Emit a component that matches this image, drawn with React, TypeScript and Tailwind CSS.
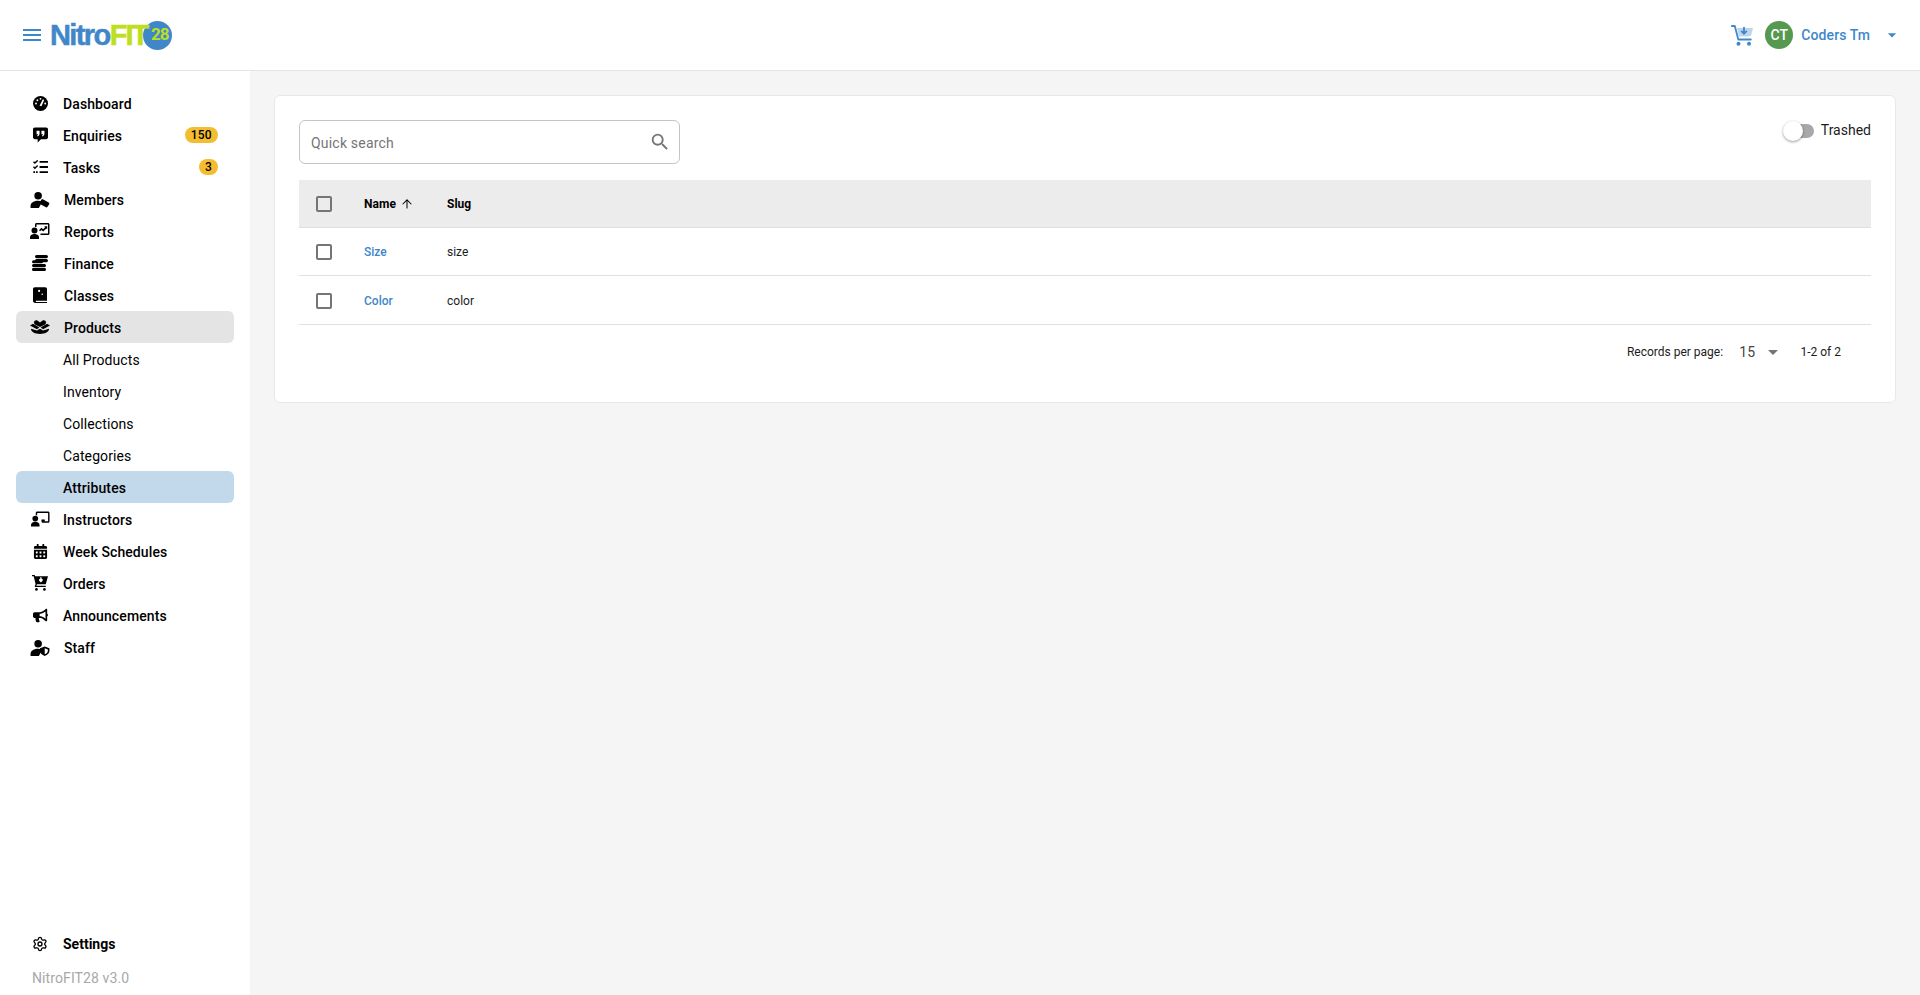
import React from "react"
import { ArrowUp, Settings } from "lucide-react"
import { FaCalendarAlt, FaBullhorn } from "react-icons/fa"
import { MdArrowDropDown, MdMenu, MdSearch } from "react-icons/md"

const Person = () => (
  <>
    <circle cx="8" cy="5" r="4" />
    <path d="M0 18v-2.500C0 12 4.200 10.300 8 10.300c1.500 0 3 .3 4.400.8L8.800 18H0z" />
  </>
)

const DashboardIcon = () => (
  <svg viewBox="0 0 16 16" className="h-[15px] w-[15px]">
    <circle cx="8" cy="8" r="8" fill="black" />
    <path d="M7 10.500L10.500 3.500l1.400.7L9 11z" fill="white" />
    <circle cx="3.200" cy="8" r="1" fill="white" />
    <circle cx="4.700" cy="4.500" r="1" fill="white" />
    <circle cx="8" cy="3" r="1" fill="white" />
    <circle cx="13" cy="8" r="1" fill="white" />
  </svg>
)

const EnquiriesIcon = () => (
  <svg viewBox="0 0 16 16" className="h-4 w-[15px]">
    <path d="M2 0h12c1.200 0 2 .8 2 2v8.500c0 1.200-.8 2-2 2H8.500L5 16v-3.500H2c-1.200 0-2-.8-2-2V2C0 .8.800 0 2 0z" fill="black" />
    <path d="M3.800 3.500h3.200v3.200c0 1.300-.8 2.300-2 2.800l-.6-1c.6-.3 1-.8 1-1.300H3.800zM9 3.500h3.200v3.200c0 1.300-.8 2.300-2 2.800l-.6-1c.6-.3 1-.8 1-1.300H9z" fill="white" />
  </svg>
)

const TasksIcon = () => (
  <svg viewBox="0 0 16 15" className="h-[14px] w-[15px]" fill="none" stroke="black">
    <path d="M7 2h9M7 7.500h9M7 13h9" strokeWidth="2" />
    <path d="M.5 1.800L2 3.300 5 .4M.5 7.300L2 8.800 5 5.900" strokeWidth="1.500" />
    <path d="M.3 13h1.800M3.200 13h1.800" strokeWidth="2" />
  </svg>
)

const MembersIcon = () => (
  <svg viewBox="0 0 20 18" className="h-[17px] w-5" fill="currentColor">
    <Person />
    <path d="M13 8.800l6.200 3.500c.6.400.9 1.100.5 1.700l-1.700 2.800c-.4.600-1.100.8-1.700.5l-5.800-3.400c-.5-.3-.7-.8-.5-1.300l1-2.800c.3-.9 1.300-1.400 2-1z" />
  </svg>
)

const ReportsIcon = () => (
  <svg viewBox="0 0 20 16" className="h-4 w-5" fill="currentColor">
    <circle cx="4.500" cy="7.500" r="3" />
    <path d="M0 16v-1.600C0 12 2.600 11 4.500 11s4.500 1 4.500 3.400V16H0z" />
    <path d="M5 1.500C5 .7 5.700 0 6.500 0H18c.8 0 1.500.7 1.500 1.500v9c0 .8-.7 1.500-1.500 1.500h-7.500v-1.600H18V1.600H6.500V4H5z" />
    <path d="M9 7.200l2.400-2.400 1.700 1.500 2-2.100-.9-.9h3v3l-.9-.9-3.100 3.100-1.700-1.500L10 8.200z" />
  </svg>
)

const FinanceIcon = () => (
  <svg viewBox="0 0 16 16" className="h-4 w-4" fill="black">
    <rect x="3" y="0" width="13" height="3.200" rx="1.600" />
    <rect x="3" y="4" width="13" height="3.200" rx="1.600" />
    <rect x="0" y="5.200" width="11" height="3" rx="1.500" />
    <rect x="0" y="9" width="14" height="3" rx="1.500" />
    <rect x="0" y="12.800" width="14" height="3.200" rx="1.600" />
  </svg>
)

const ClassesIcon = () => (
  <svg viewBox="0 0 16 18" className="h-4 w-[14px]" fill="currentColor">
    <path fillRule="evenodd" d="M2 0h12c1 0 2 1 2 2v13.500H3.500a1 1 0 0 0 0 1.500H16v1H2.500C1 18 0 17 0 15.500V2C0 1 1 0 2 0zm5 5.500a1.200 1.200 0 1 0 0-2.400 1.200 1.200 0 0 0 0 2.400zm3.500 3.500a.9.9 0 1 0 0-1.800.9.9 0 0 0 0 1.800z" />
  </svg>
)

const ProductsIcon = () => (
  <svg viewBox="0 0 20 14" className="h-[14px] w-5" fill="currentColor">
    <path d="M4 2.500C4 .5 6.200-.3 7.700.7L10 2.500 12.300.7C13.800-.3 16 .5 16 2.500c0 1-.6 1.600-1.300 2.200L10 7 5.300 4.700C4.600 4.100 4 3.500 4 2.500z" />
    <path d="M0 5.500l3-1.800 6.300 3.700L7 9.200zM20 5.500l-3-1.800-6.300 3.700L13 9.200z" />
    <path d="M1 8.800l6 1.700 3-1.700 3 1.700 6-1.700C19 12 15 14 10 14S1 12 1 8.800z" />
  </svg>
)

const InstructorsIcon = () => (
  <svg viewBox="0 0 20 16" className="h-4 w-[19px]" fill="currentColor">
    <circle cx="4.500" cy="7.500" r="3" />
    <path d="M0 16v-1.600C0 12 2.600 11 4.500 11s4.500 1 4.500 3.400V16H0z" />
    <path d="M5 1.500C5 .7 5.700 0 6.500 0H18c.8 0 1.500.7 1.500 1.500v9c0 .8-.7 1.500-1.500 1.500h-6.500v-1.600H18V1.600H6.500V4H5z" />
    <path d="M11 8.500h3.500v2.500H11z" />
  </svg>
)

const OrdersIcon = () => (
  <svg viewBox="0 0 18 18" className="h-4 w-4" fill="currentColor">
    <path fillRule="evenodd" d="M0 0h3l.6 1.500H18l-2.500 9H5.500L5 12h10.500v1.500H3L4 10 1.900 1.500H0zM8 4.500v2l2 2 2-2v-2h-1.200v-2H9.200v2z" />
    <circle cx="5" cy="16.200" r="1.500" />
    <circle cx="14" cy="16.200" r="1.500" />
  </svg>
)

const StaffIcon = () => (
  <svg viewBox="0 0 20 18" className="h-[17px] w-5" fill="currentColor">
    <Person />
    <path fillRule="evenodd" d="M15 8l5 1.800v3C20 15 17.800 17 15 18c-2.800-1-5-3-5-5.200v-3zm0 1.800v6.400c1.700-.8 3.300-2 3.300-3.500v-1.700z" />
  </svg>
)

const CartIcon = () => (
  <svg viewBox="0 0 22 21" className="h-[21px] w-[22px]">
    <path d="M6 3h16l-1.500 6c-.3 1.500-1.200 2.500-2.800 2.500H8z" fill="#bcd6ee" />
    <path d="M.8 1h3l3.500 13.500h12.500" fill="none" stroke="#3f87c9" strokeWidth="1.800" strokeLinecap="round" strokeLinejoin="round" />
    <circle cx="7.500" cy="18.800" r="2" fill="#3f87c9" />
    <circle cx="18" cy="18.800" r="2" fill="#3f87c9" />
    <path d="M13 2v6.500M10.200 5.800L13 8.800l2.800-3" fill="none" stroke="#3f87c9" strokeWidth="1.800" />
  </svg>
)

type NavItem = { label: string; icon?: React.ReactNode; badge?: string; bg?: string; sub?: boolean; shift?: boolean }

const navItems: NavItem[] = [
  { label: "Dashboard", icon: <DashboardIcon /> },
  { label: "Enquiries", icon: <EnquiriesIcon />, badge: "150" },
  { label: "Tasks", icon: <TasksIcon />, badge: "3" },
  { label: "Members", icon: <MembersIcon />, shift: true },
  { label: "Reports", icon: <ReportsIcon />, shift: true },
  { label: "Finance", icon: <FinanceIcon />, shift: true },
  { label: "Classes", icon: <ClassesIcon />, shift: true },
  { label: "Products", icon: <ProductsIcon />, shift: true, bg: "bg-[#e4e4e4]" },
  { label: "All Products", sub: true },
  { label: "Inventory", sub: true },
  { label: "Collections", sub: true },
  { label: "Categories", sub: true },
  { label: "Attributes", bg: "bg-[#c2d9ec]" },
  { label: "Instructors", icon: <InstructorsIcon /> },
  { label: "Week Schedules", icon: <FaCalendarAlt size={15} /> },
  { label: "Orders", icon: <OrdersIcon /> },
  { label: "Announcements", icon: <FaBullhorn size={15} /> },
  { label: "Staff", icon: <StaffIcon />, shift: true },
]

function NavRow({ item }: { item: NavItem }) {
  return (
    <div className={`flex h-8 items-center rounded-md pr-4 pl-2 ${item.bg ?? ""}`}>
      <span className="mr-[7px] flex w-8 justify-center text-black">{item.icon}</span>
      <span className={`pt-0.5 text-sm tracking-[0.1px] text-black ${item.sub ? "font-normal" : "font-medium"} ${item.shift ? "ml-px" : ""}`}>
        {item.label}
      </span>
      {item.badge && (
        <span className="ml-auto flex h-4 items-center rounded-full bg-[#f3bd2f] px-1.5 text-xs font-medium tracking-[0.3px] text-black">
          {item.badge}
        </span>
      )}
    </div>
  )
}

function Checkbox() {
  return <span className="block h-4 w-4 rounded-[2px] border-2 border-[#757575]" />
}

const rows = [
  { name: "Size", slug: "size", height: "h-12" },
  { name: "Color", slug: "color", height: "h-[49px]" },
]

export default function App() {
  return (
    <div className="flex h-screen flex-col overflow-hidden bg-[#f5f5f5] font-['Roboto',sans-serif]">
      <header className="flex h-[71px] shrink-0 items-center border-b border-[#e4e4e4] bg-white pr-[18px] pl-5">
        <MdMenu size={24} className="text-[#3f87c9]" />
        <div className="ml-1.5 flex items-center">
          <span className="font-['Liberation_Sans',sans-serif] text-[29px] leading-none font-bold tracking-[-1.600px] text-[#3f87c9] [-webkit-text-stroke:0.5px_#3f87c9]">Nitro</span>
          <span className="relative z-10 font-['Liberation_Sans',sans-serif] text-[29px] leading-none font-bold tracking-[-2px] text-[#bede1e] [-webkit-text-stroke:0.5px_#bede1e]">FIT</span>
          <span className="-ml-[4px] flex h-[29px] w-[29px] items-center justify-center rounded-full bg-[#3f87c9] pl-1 text-[17px] font-bold tracking-[-1px] text-[#bede1e]">28</span>
        </div>
        <div className="ml-auto flex items-center">
          <CartIcon />
          <span className="ml-[12px] flex h-7 w-7 items-center justify-center rounded-full bg-[#55984f] text-sm font-medium text-white">CT</span>
          <span className="ml-2 text-sm font-medium tracking-[0.1px] text-[#3f87c9]">Coders Tm</span>
          <MdArrowDropDown size={20} className="ml-[12px] text-[#3f87c9]" />
        </div>
      </header>

      <div className="flex min-h-0 flex-1">
        <aside className="flex w-[250px] shrink-0 flex-col justify-between bg-white px-4 pt-4 pb-[7px]">
          <nav className="flex flex-col">
            {navItems.map((item) => (
              <NavRow key={item.label} item={item} />
            ))}
          </nav>
          <div>
            <div className="flex h-8 items-center pl-2">
              <span className="mr-[7px] flex w-8 justify-center text-black">
                <Settings size={16} strokeWidth={2} />
              </span>
              <span className="text-sm font-bold text-black">Settings</span>
            </div>
            <div className="mt-2 pl-4 text-sm leading-5 tracking-[0.1px] text-[#a8a8a8]">NitroFIT28 v3.0</div>
          </div>
        </aside>

        <main className="min-w-0 flex-1 p-6">
          <section className="rounded-md border border-[#e8e8e8] bg-white px-6 pt-6 pb-[23px]">
            <div className="flex items-start justify-between">
              <div className="flex h-11 w-[381px] items-center justify-between rounded-md border border-[#c4c4c4] pr-2 pl-[11px]">
                <span className="pt-px text-sm tracking-[0.2px] text-[#757575]">Quick search</span>
                <MdSearch size={22} className="text-[#757575]" />
              </div>
              <div className="flex items-center">
                <span className="relative mt-0.5 block h-[14px] w-[24px] rounded-full bg-[#a8a8a8]">
                  <span className="absolute top-[-3px] left-[-7px] block h-5 w-5 rounded-full bg-white shadow-[0_1px_3px_rgba(0,0,0,0.4)]" />
                </span>
                <span className="ml-[7px] text-sm text-[#1c1c1c]">Trashed</span>
              </div>
            </div>

            <div className="mt-4 flex h-12 items-center border-b border-[#e0e0e0] bg-[#ececec] pt-px pl-[17px]">
              <Checkbox />
              <span className="ml-8 flex w-[83px] items-center text-xs font-bold tracking-[0.1px] text-black">
                Name
                <ArrowUp size={14} strokeWidth={1.75} className="ml-1" />
              </span>
              <span className="text-xs font-bold text-black">Slug</span>
            </div>
            {rows.map((row) => (
              <div key={row.slug} className={`flex items-center border-b border-[#e0e0e0] pt-px pl-[17px] ${row.height}`}>
                <Checkbox />
                <span className="ml-8 w-[83px] text-xs font-medium text-[#3f87c9]">{row.name}</span>
                <span className="text-xs text-[#1c1c1c]">{row.slug}</span>
              </div>
            ))}

            <div className="flex h-[54px] items-center justify-end pr-[30px] text-xs text-[#1c1c1c]">
              <span>Records per page:</span>
              <span className="ml-4 text-sm tracking-[0.3px] text-[#444]">15</span>
              <MdArrowDropDown size={24} className="ml-1.5 text-[#757575]" />
              <span className="ml-[15px]">1-2 of 2</span>
            </div>
          </section>
        </main>
      </div>
    </div>
  )
}
